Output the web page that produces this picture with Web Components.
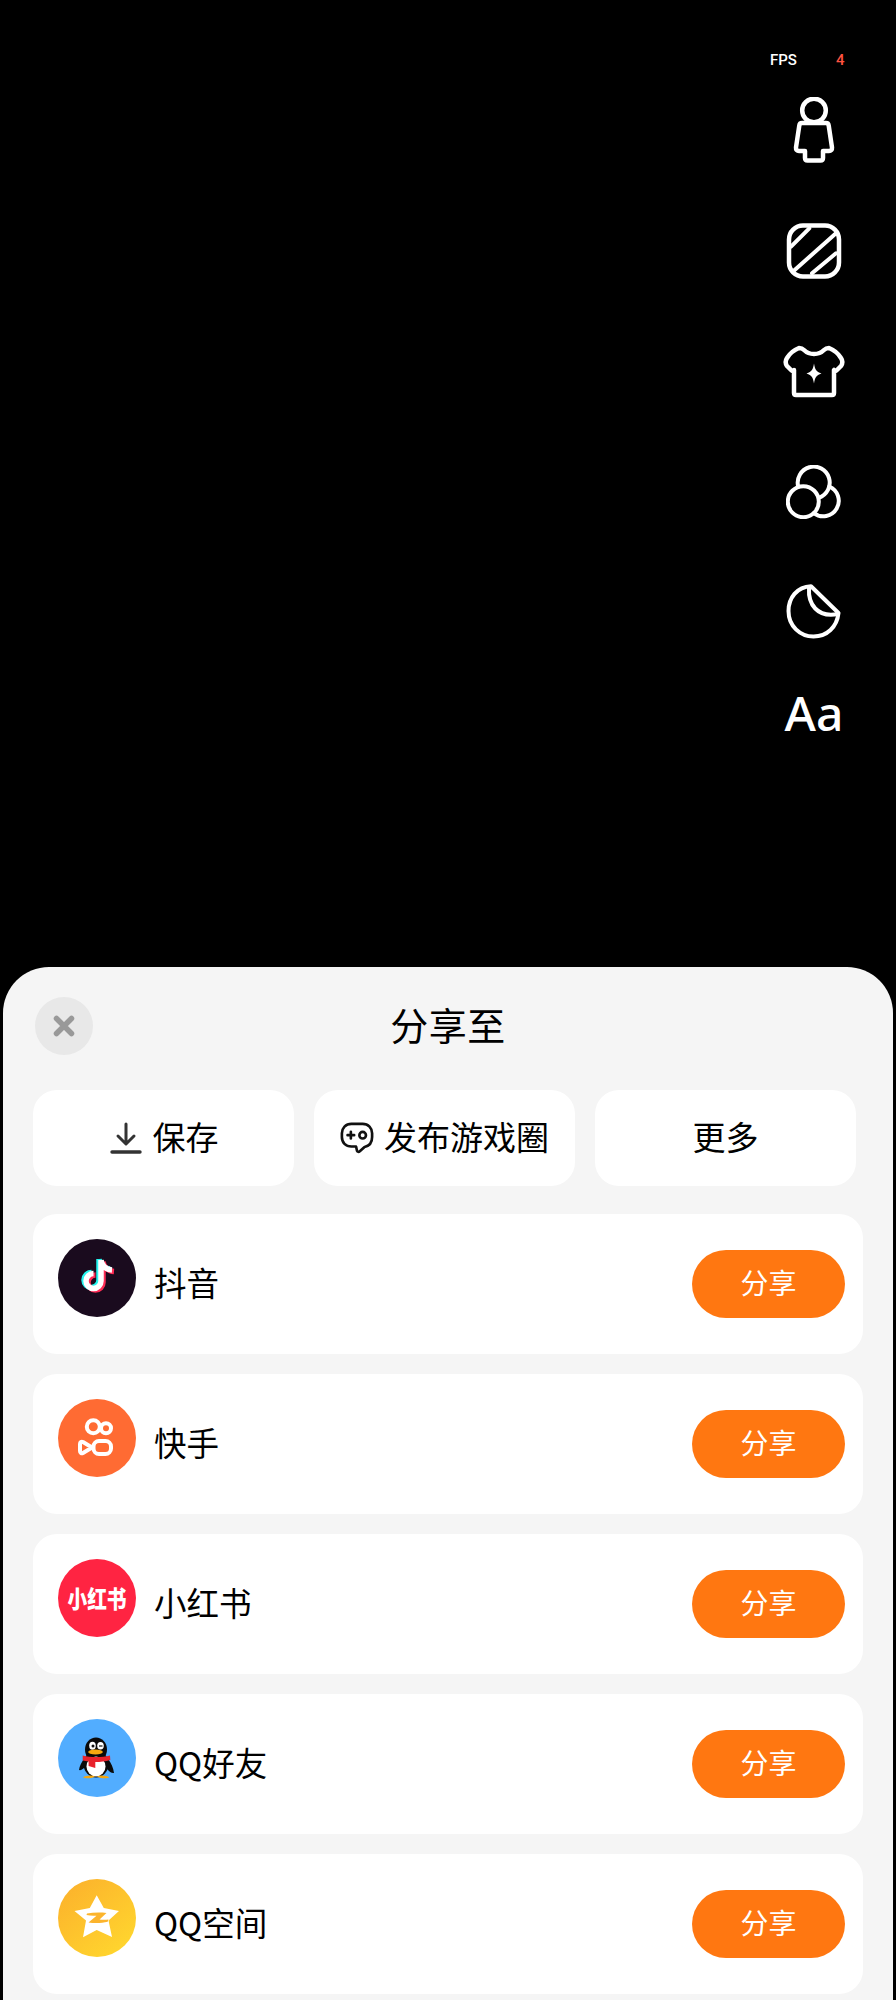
<!DOCTYPE html>
<html lang="zh">
<head>
<meta charset="utf-8">
<title>分享至</title>
<style>
  html, body { margin: 0; padding: 0; background: #000; }
  body { width: 896px; height: 2000px; overflow: hidden; font-family: "Noto Sans CJK SC", "Noto Sans", sans-serif; }
</style>
</head>
<body>
<camera-screen>
  <tool-rail></tool-rail>
  <share-sheet>
    <action-chip><svg slot="icon" width="34" height="34" viewBox="0 0 34 34" fill="none" stroke="#333" stroke-linecap="round" stroke-linejoin="round"><path d="M17 3v19M9 15l8 8 8-8" stroke-width="3"/><path d="M3 31h28" stroke-width="3.400"/></svg>保存</action-chip>
    <action-chip><svg slot="icon" width="34" height="34" viewBox="0 0 36 34" fill="none" stroke="#111" stroke-width="2.800" stroke-linecap="round" stroke-linejoin="round"><path d="M12 2h12c6 0 10 4.500 10 10v4c0 6-3 9.500-8 10.500l-5 4.500c-1.200 1-2.500.8-3-.5L17 26h-5C6 26 2 22 2 16v-4C2 6.500 6 2 12 2z"/><path d="M8 14h7M11.500 10.500v7"/><circle cx="24" cy="14" r="3.500"/></svg>发布游戏圈</action-chip>
    <action-chip>更多</action-chip>

    <share-row name="抖音">
      <svg slot="logo" viewBox="0 0 78 78"><circle cx="39" cy="39" r="39" fill="#1a0b1e"/>
        <g fill="none" stroke-width="5.500">
          <path d="M43 21v21a7.500 7.500 0 1 1-7.500-7.500M43 21c.5 5 4.500 9.500 11 10" stroke="#25f4ee" transform="translate(-2 -1)"/>
          <path d="M43 21v21a7.500 7.500 0 1 1-7.500-7.500M43 21c.5 5 4.500 9.500 11 10" stroke="#fe2c55" transform="translate(2 1.500)"/>
          <path d="M43 21v21a7.500 7.500 0 1 1-7.500-7.500M43 21c.5 5 4.500 9.500 11 10" stroke="#fff"/>
        </g></svg>
    </share-row>
    <share-row name="快手">
      <svg slot="logo" viewBox="0 0 78 78"><circle cx="39" cy="39" r="39" fill="#ff6b33"/>
        <g fill="none" stroke="#fff" stroke-width="4" stroke-linejoin="round">
          <circle cx="35.300" cy="27.700" r="6.500"/><circle cx="48" cy="29.300" r="5"/>
          <rect x="35.500" y="42" width="17.500" height="13" rx="5.500"/>
          <path d="M34 48.500l-9-5.500c-1.500-.8-3 0-3 2v7c0 2 1.500 2.800 3 2z"/>
        </g></svg>
    </share-row>
    <share-row name="小红书">
      <svg slot="logo" viewBox="0 0 78 78"><circle cx="39" cy="39" r="39" fill="#ff2442"/></svg>
      <span slot="mark">小红书</span>
    </share-row>
    <share-row name="QQ好友">
      <svg slot="logo" viewBox="0 0 78 78"><circle cx="39" cy="39" r="39" fill="#52adff"/>
        <path d="M26 40c-2.500 3-4.500 7-5 11 1.500.5 4-.5 6-3zM50 40c3 3.500 5.500 9 6 14-2 .5-5-1.500-7-4z" fill="#0a0a0a"/>
        <ellipse cx="38" cy="30.500" rx="11" ry="12" fill="#0a0a0a"/>
        <ellipse cx="38" cy="45" rx="12.500" ry="13.500" fill="#0a0a0a"/>
        <ellipse cx="38" cy="47.500" rx="9.500" ry="10" fill="#fff"/>
        <ellipse cx="34.500" cy="26.700" rx="3.300" ry="4" fill="#fff"/><ellipse cx="42.500" cy="26.700" rx="3.300" ry="3.800" fill="#fff"/>
        <circle cx="35" cy="27" r="1.500" fill="#111"/><path d="M41 27h3.500" stroke="#111" stroke-width="1.200"/>
        <ellipse cx="37.500" cy="33" rx="7.300" ry="2.500" fill="#f5a70f"/>
        <path d="M24.700 36.500c8 2 19 2 27.300 0l.3 4.500c-5 1.500-10 2-15 2v6l-6.700-2v-4.500c-2-.3-4-.5-5.900-1z" fill="#e8212b"/>
        <path d="M25 58.500c2-1.800 8-2.500 12-1.300-1 1.800-9 2.800-12 1.300zM39 57.200c4-1.200 10-.5 12.300 1.300-3 1.500-11 .5-12.300-1.300z" fill="#f5a70f"/>
      </svg>
    </share-row>
    <share-row name="QQ空间">
      <svg slot="logo" viewBox="0 0 78 78"><defs><linearGradient id="qz" x1="0.150" y1="0.100" x2="0.800" y2="0.900"><stop offset="0" stop-color="#fcb42c"/><stop offset="1" stop-color="#ffd42e"/></linearGradient></defs>
        <circle cx="39" cy="39" r="39" fill="url(#qz)"/>
        <path d="M38.700 16.200L45.800 29 61 32 50.500 41.500 54 58 38.700 51 25 58.200 28 41.500 16.500 32 31.800 29z" fill="#fff"/>
        <path d="M29 34.500c6-1 13-1.200 19.500-.5l-7 6.500c3 .4 6 .4 9 0l-.8 2.300c-6 1.500-13 1.600-19.200.7l8-6.800c-3.800.3-7 0-10-.7z" fill="#fcb42c"/>
      </svg>
    </share-row>
  </share-sheet>
</camera-screen>

<script>
class CameraScreen extends HTMLElement {
  connectedCallback() {
    const shadowRoot = this.attachShadow({ mode: 'open' });
    shadowRoot.innerHTML = `
    <style>
      :host { display: flex; flex-direction: column; width: 896px; height: 2000px; background: #000; }
      .top { height: 967px; flex: none; display: flex; justify-content: flex-end; }
      .bottom { flex: 1; display: flex; padding: 0 3px; min-height: 0; }
    </style>
    <div class="top"><slot name="rail"></slot></div>
    <div class="bottom"><slot></slot></div>
    `;
    this.querySelector('tool-rail').slot = 'rail';
  }
}

class ToolRail extends HTMLElement {
  connectedCallback() {
    const shadowRoot = this.attachShadow({ mode: 'open' });
    shadowRoot.innerHTML = `
    <style>
      :host { display: block; width: 150px; color: #fff; font-family: Roboto, "Liberation Sans", sans-serif; }
      .fps { display: flex; height: 20px; margin-top: 50px; font-size: 15px; line-height: 20px; font-weight: 500; padding-left: 24px; }
      .fps b { font-weight: 500; color: #ff5240; margin-left: 39px; }
      .tool { display: flex; justify-content: center; align-items: center; width: 136px; margin-top: var(--gap); }
      svg { display: block; fill: none; stroke: #fff; stroke-width: 4.500; stroke-linecap: round; stroke-linejoin: round; }
      .aa { font-family: "Noto Sans", sans-serif; font-weight: 500; font-size: 48px; line-height: 56px; height: 56px; }
    </style>
    <div class="fps">FPS<b>4</b></div>
    <div class="tool" style="--gap:27px"><svg width="44" height="66" viewBox="0 0 44 66"><circle cx="22" cy="13.500" r="11.800"/><path d="M10 26h24c1.500 0 2.500 1 2.700 2.500l3.300 22c.2 2-1 3.500-3 3.500H31v7c0 1.500-1 2.500-2.500 2.500h-13C14 63.500 13 62.500 13 61v-7H7c-2 0-3.200-1.500-3-3.500l3.300-22C7.500 27 8.500 26 10 26z"/></svg></div>
    <div class="tool" style="--gap:60px"><svg width="56" height="56" viewBox="0 0 56 56"><rect x="3" y="2.500" width="50" height="51" rx="14"/><path d="M5 23.700L23.300 5.300M6.700 48.700L50 10.300M26 50.300L50 30.300" style="stroke-width:4"/></svg></div>
    <div class="tool" style="--gap:65px"><svg width="64" height="54" viewBox="0 0 64 54"><path d="M17 4C19 4 20 4 22 6C25 9 28 10 32 10C36 10 39 9 42 6C44 4 45 4 47 4C52 6 56 9 59 14C61 17 61 19 59 22L55 26C54 27 53 27 52 26V49C52 50.500 51 51 50 51H14C13 51 12 50.500 12 49V26C11 27 10 27 9 26L5 22C3 19 3 17 5 14C8 9 12 6 17 4z"/><path d="M32 19.500c1 6 2 8 7.500 10-5.500 2-6.500 4-7.500 10-1-6-2-8-7.500-10 5.500-2 6.500-4 7.500-10z" fill="#fff" stroke="none"/></svg></div>
    <div class="tool" style="--gap:67px"><svg width="56" height="54" viewBox="0 0 56 54" style="stroke-width:4"><circle cx="17.300" cy="36.700" r="15.500"/><path d="M12.200 21.600A16 16 0 1 1 32.800 32.800"/><path d="M43.200 21.500A15.500 15.500 0 1 1 27.800 48.100"/></svg></div>
    <div class="tool" style="--gap:65px"><svg width="56" height="56" viewBox="0 0 56 56" style="stroke-width:4"><path d="M25 2.200C11 2.600 2.500 14 2.500 27C2.500 42 14 52.500 27.500 52.500C41 52.500 51 43 52.500 29z"/><path d="M23 4c-1 16 8 30 29 26"/></svg></div>
    <div class="tool aa" style="--gap:45px">Aa</div>
    `;
  }
}

class ShareSheet extends HTMLElement {
  connectedCallback() {
    const shadowRoot = this.attachShadow({ mode: 'open' });
    shadowRoot.innerHTML = `
    <style>
      :host { display: block; flex: 1; background: #f5f5f5; border-radius: 46px 46px 0 0; color: #000;
        font-family: "Noto Sans CJK SC", "Noto Sans", sans-serif; padding: 30px 30px 0; box-sizing: border-box; }
      header { position: relative; display: flex; justify-content: center; align-items: center; height: 58px; }
      h1 { margin: -5px 0 0; font-size: 38px; font-weight: 400; line-height: 58px; letter-spacing: .5px; }
      .close { position: absolute; left: 2px; top: 0; width: 58px; height: 58px; border-radius: 50%; background: #e8e8e8;
        border: none; padding: 0; display: flex; align-items: center; justify-content: center; }
      .actions { display: grid; grid-template-columns: 261px 261px 261px; column-gap: 20px; margin-top: 35px; }
      .rows { display: flex; flex-direction: column; gap: 20px; margin-top: 28px; width: 830px; }
    </style>
    <header>
      <button class="close" aria-label="关闭"><svg width="24" height="24" viewBox="0 0 24 24" fill="none" stroke="#999" stroke-width="5.500" stroke-linecap="round"><path d="M4.500 4.500l15 15M19.500 4.500l-15 15"/></svg></button>
      <h1>分享至</h1>
    </header>
    <div class="actions"><slot name="actions"></slot></div>
    <div class="rows"><slot></slot></div>
    `;
    this.querySelectorAll('action-chip').forEach(chip => { chip.slot = 'actions'; });
  }
}

class ActionChip extends HTMLElement {
  connectedCallback() {
    const shadowRoot = this.attachShadow({ mode: 'open' });
    shadowRoot.innerHTML = `
    <style>
      :host { display: flex; align-items: center; justify-content: center; gap: 10px; height: 96px; background: #fff;
        border-radius: 24px; font-size: 33px; box-sizing: border-box; padding-bottom: 4px; }
      ::slotted(svg) { display: block; flex: none; margin-top: 4px; }
    </style>
    <slot name="icon"></slot><slot></slot>
    `;
  }
}

class ShareRow extends HTMLElement {
  connectedCallback() {
    const shadowRoot = this.attachShadow({ mode: 'open' });
    shadowRoot.innerHTML = `
    <style>
      :host { display: flex; height: 140px; background: #fff; border-radius: 24px; box-sizing: border-box; padding: 25px 18px 0 25px; }
      .logo { position: relative; flex: none; width: 78px; height: 78px; }
      ::slotted(svg) { display: block; width: 78px; height: 78px; }
      ::slotted([slot=mark]) { position: absolute; left: 0; right: 0; top: 0; line-height: 78px; text-align: center;
        color: #fff; font-size: 24px; font-weight: 900; white-space: nowrap; transform: scaleX(.82); }
      .name { flex: 1; font-size: 32.500px; line-height: 44px; margin: 21px 0 0 18px; }
      .share { flex: none; width: 153px; height: 68px; margin-top: 11px; border: none; padding: 0 0 4px; border-radius: 34px; background: #ff7711;
        color: #fff; font: inherit; font-size: 28px; }
    </style>
    <div class="logo"><slot name="logo"></slot><slot name="mark"></slot></div>
    <div class="name">${this.getAttribute('name')}</div>
    <button class="share">分享</button>
    `;
  }
}

customElements.define('camera-screen', CameraScreen);
customElements.define('tool-rail', ToolRail);
customElements.define('share-sheet', ShareSheet);
customElements.define('action-chip', ActionChip);
customElements.define('share-row', ShareRow);
</script>
</body>
</html>
